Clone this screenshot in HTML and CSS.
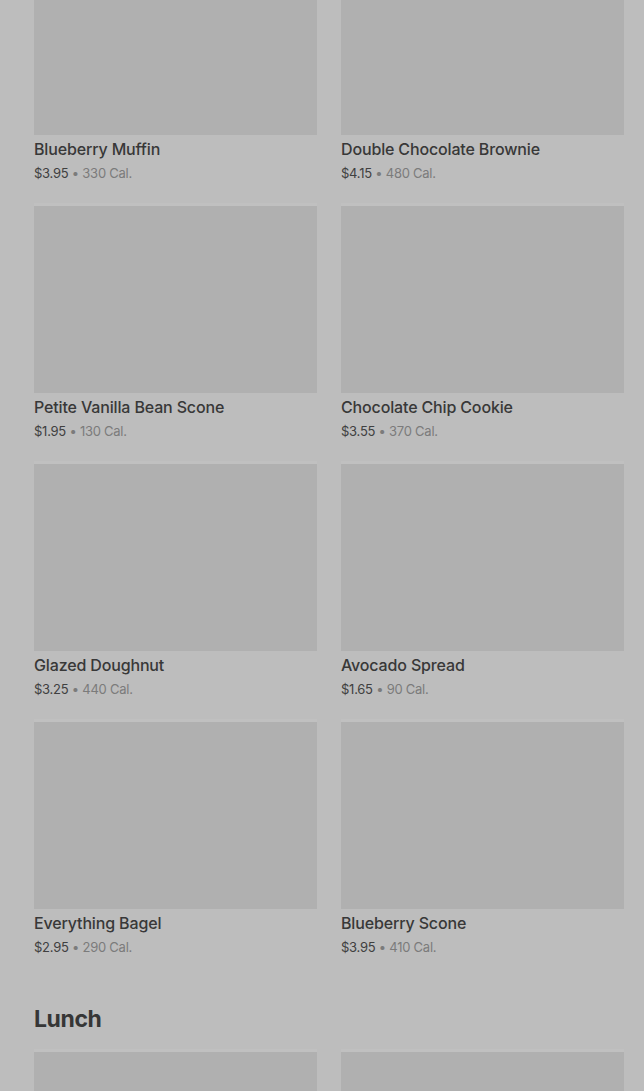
FILE: index.html
```html
<!DOCTYPE html>
<html lang="en">
<head>
    <meta charset="UTF-8">
    <meta name="viewport" content="width=device-width, initial-scale=1.0">
    <title>Menu</title>
    <link rel="stylesheet" href="styles.css">
</head>
<body>
    <div class="menu">
        <div class="section">
            <div class="item-grid">
                <div class="item">
                    <div class="item-image"></div>
                    <div class="item-info">
                        <div class="item-name">Blueberry Muffin</div>
                        <div class="item-meta"><span class="price">$3.95</span> • 330 Cal.</div>
                    </div>
                </div>
                <div class="item">
                    <div class="item-image"></div>
                    <div class="item-info">
                        <div class="item-name">Double Chocolate Brownie</div>
                        <div class="item-meta"><span class="price">$4.15</span> • 480 Cal.</div>
                    </div>
                </div>
                <div class="item">
                    <div class="item-image"></div>
                    <div class="item-info">
                        <div class="item-name">Petite Vanilla Bean Scone</div>
                        <div class="item-meta"><span class="price">$1.95</span> • 130 Cal.</div>
                    </div>
                </div>
                <div class="item">
                    <div class="item-image"></div>
                    <div class="item-info">
                        <div class="item-name">Chocolate Chip Cookie</div>
                        <div class="item-meta"><span class="price">$3.55</span> • 370 Cal.</div>
                    </div>
                </div>
                <div class="item">
                    <div class="item-image"></div>
                    <div class="item-info">
                        <div class="item-name">Glazed Doughnut</div>
                        <div class="item-meta"><span class="price">$3.25</span> • 440 Cal.</div>
                    </div>
                </div>
                <div class="item">
                    <div class="item-image"></div>
                    <div class="item-info">
                        <div class="item-name">Avocado Spread</div>
                        <div class="item-meta"><span class="price">$1.65</span> • 90 Cal.</div>
                    </div>
                </div>
                <div class="item">
                    <div class="item-image"></div>
                    <div class="item-info">
                        <div class="item-name">Everything Bagel</div>
                        <div class="item-meta"><span class="price">$2.95</span> • 290 Cal.</div>
                    </div>
                </div>
                <div class="item">
                    <div class="item-image"></div>
                    <div class="item-info">
                        <div class="item-name">Blueberry Scone</div>
                        <div class="item-meta"><span class="price">$3.95</span> • 410 Cal.</div>
                    </div>
                </div>
            </div>
        </div>

        <div class="section">
            <h2>Lunch</h2>
            <div class="item-grid">
                <div class="item">
                    <div class="item-image"></div>
                </div>
                <div class="item">
                    <div class="item-image"></div>
                </div>
            </div>
        </div>
    </div>
</body>
</html>
```

FILE: styles.css
```css
body {
    font-family: Inter, "Noto Sans", sans-serif;
    background-color: #bdbdbd;
    margin: 0;
    padding: 0;
    overflow: hidden;
}

.menu {
    margin-top: -52px;
    padding: 0 20px 0 34px;
}

.item-grid {
    display: grid;
    grid-template-columns: 1fr 1fr;
    column-gap: 24px;
    row-gap: 24px;
}

.item {
    height: 234px;
}

.item-image {
    height: 187px;
    background-color: #b0b0b0;
    box-shadow: 0 -3px 0 #c0c0c0;
}

.item-info {
    padding-top: 4px;
}

.item-name {
    font-size: 16px;
    font-weight: 500;
    line-height: 20px;
    letter-spacing: -0.15px;
    color: #383838;
}

.item-meta {
    margin-top: 4px;
    font-size: 13px;
    line-height: 20px;
    letter-spacing: -0.25px;
    color: #7b7b7b;
}

.price {
    color: #404040;
}

h2 {
    font-size: 23px;
    font-weight: 700;
    line-height: 32px;
    letter-spacing: -0.4px;
    color: #363636;
    margin: 47px 0 17px;
}
```
